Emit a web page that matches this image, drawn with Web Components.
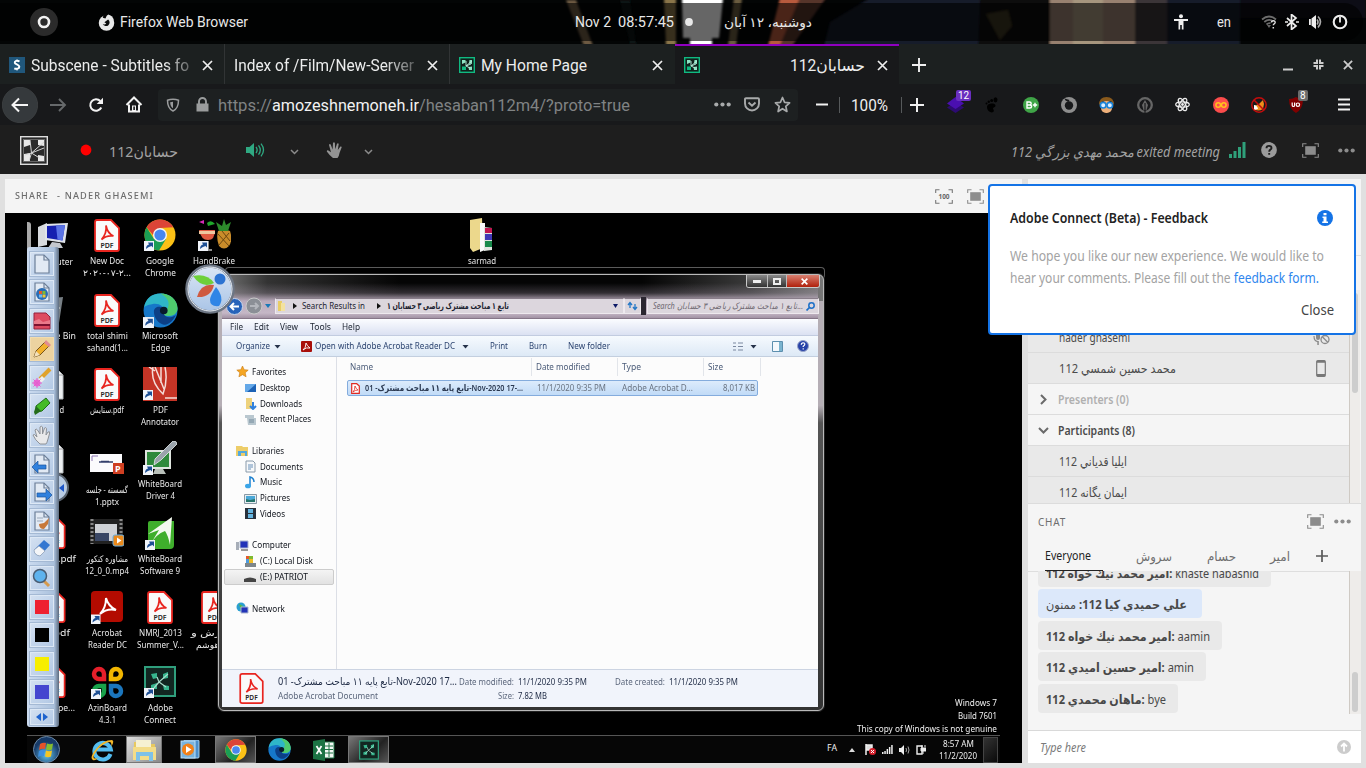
<!DOCTYPE html>
<html lang="en">
<head>
<meta charset="utf-8">
<title>Adobe Connect</title>
<style>
html,body{margin:0;height:100%;overflow:hidden;background:#e0e0e0}
body{font-family:Roboto,"DejaVu Sans",sans-serif}
</style>
</head>
<body>
<app-shell></app-shell>
<script>
/* ---------- helpers ---------- */
const svg=(w,h,vb,body,extra='')=>`<svg width="${w}" height="${h}" viewBox="${vb}" fill="none" style="display:block;flex:none" ${extra}>${body}</svg>`;
const T=(w,text,style='')=>`<fit-text w="${w}" style="${style}">${text}</fit-text>`;
/* a flex row whose cells start at the given offsets */
const row=(start,list)=>list.map(([x,html],i)=>{
  const next=i+1<list.length?list[i+1][0]-x:0;
  const lead=i===0?x-start:0;
  return `<div class="cell" style="margin-left:${lead}px;${next?`width:${next}px`:''}">${html}</div>`;
}).join('');
const define=(name,css,html)=>customElements.define(name,class extends HTMLElement{
  constructor(){super();
    const t=document.createElement('template');
    t.innerHTML=`<style>:host{display:block;box-sizing:border-box}*{box-sizing:border-box}.cell{flex:none;display:flex;align-items:center}${css}</style>${typeof html==='function'?html(this):html}`;
    this.attachShadow({mode:'open'}).append(t.content.cloneNode(true));
  }
});
const I={};
/* ---------- shell icons ---------- */
I.ring=svg(28,28,'0 0 28 28','<circle cx="14" cy="14" r="14" fill="#2b2b2b"/><circle cx="14" cy="14" r="5" stroke="#f2f2f2" stroke-width="2.600"/>');
I.fox=svg(17,17,'0 0 16 16','<circle cx="8" cy="8.500" r="7.300" fill="#e8e8e8"/><path d="M5.500 0h3.500L7 4.200 4.500 3.500z" fill="#050505"/><path d="M9.500 5.200a3.400 3.400 0 1 1-5 4.300q2 .8 3.300-.6L6 7.800z" fill="#0a0b0b"/><path d="M8.500 3.500Q8 2 9.500.5q4 1 5.500 5l-3.500-.5z" fill="#e8e8e8"/>');
I.access=svg(14,16,'0 0 14 16','<g fill="#eee"><circle cx="7" cy="2.300" r="2"/><path d="M0 5h14v2H9.500v8.500H7.800V11H6.200v4.500H4.500V7H0z"/></g>');
I.wifi=svg(16,14,'0 0 16 14','<g stroke="#6d6d6d" stroke-width="1.800"><path d="M1 4.500Q8-1.500 15 4.500"/><path d="M3.300 7Q8 3 12 6.500"/><path d="M5.500 9.500Q8 7.300 9.500 8.500"/></g><path d="M6 10l4 0-2 3z" fill="#666"/><path d="M10.500 7.500c0-2.500 4-2.200 3.600.2-.2 1-1.800 1.200-1.800 2.600M12.300 12v1.600" stroke="#ddd" stroke-width="1.500"/>');
I.bt=svg(14,16,'0 0 14 16','<path d="M2 4l9 8-4.500 3.500V.500L11 4l-9 8M0 8h3M11 8h3" stroke="#eee" stroke-width="1.700"/>');
I.vol=svg(15,14,'0 0 15 14','<path d="M1 4v6h1.800V4zM3.500 3.500L8 0v14L3.500 10.500z" fill="#eee"/><path d="M9 4.500q2 2.500 0 5M10 1.500q5 5 0 11" stroke="#aaa" stroke-width="1.600"/>');
I.power=svg(16,16,'0 0 16 16','<circle cx="8" cy="8" r="6.300" stroke="#eee" stroke-width="2.100"/><path d="M8 3v5.500" stroke="#eee" stroke-width="1.800"/>');
I.x=(s=11,c='#eee',w=1.700)=>svg(s,s,'0 0 11 11',`<path d="M1 1l9 9M10 1l-9 9" stroke="${c}" stroke-width="${w}"/>`);
I.plus=(s,c,w)=>svg(s,s,'0 0 14 14',`<path d="M7 0v14M0 7h14" stroke="${c}" stroke-width="${w}"/>`);
I.sub=svg(16,16,'0 0 16 16','<rect width="16" height="16" fill="#20577c"/><path d="M10.500 4.500C8 3 5.500 4 5.800 5.800c.3 1.700 4.300 1.700 4.500 3.900.2 2-2.800 2.700-5 1.600" stroke="#fff" stroke-width="2"/><path d="M8 2.500v2M8 11v2.500" stroke="#fff"/>');
I.cfav=svg(16,16,'0 0 16 16','<rect x=".7" y=".7" width="14.600" height="14.600" fill="#10211c" stroke="#10b981" stroke-width="1.400"/><path d="M3 3h3.500v2.500L3 7zM13 3v4l-3-.5L10.500 3zM9.500 10l3.500-.5V13h-3z" fill="#8fe3c4"/><path d="M3 9.500h4V13H3z" fill="#10b981"/><path d="M7 4v5l6-5M7 9l5-2M7 9l4 2" stroke="#b9efdc" stroke-width=".9"/>');
I.min=svg(10,14,'0 0 10 14','<path d="M0 11.500h10" stroke="#ccc" stroke-width="2"/>');
I.rest=svg(11,11,'0 0 11 11','<path d="M.5 4H4V.5M7 .5V4h3.500M.5 7H4v3.500M7 10.500V7h3.500" stroke="#ccc" stroke-width="2"/>');
I.back=svg(36,36,'0 0 36 36','<circle cx="18" cy="18" r="17.700" fill="#35393c" stroke="#46494c" stroke-width=".6"/><path d="M26 18H11M17 11.500L10.500 18l6.500 6.500" stroke="#f5f5f5" stroke-width="2"/>');
I.fwd=svg(18,16,'0 0 18 16','<path d="M1 8h15M10 2l6 6-6 6" stroke="#66696b" stroke-width="1.900"/>');
I.reload=svg(16,16,'0 0 16 16','<path d="M13.300 10.500A5.800 5.800 0 1 1 12.300 4" stroke="#f2f2f2" stroke-width="2"/><path d="M15 .7V7H8.700z" fill="#f2f2f2"/>');
I.home=svg(18,17,'0 0 18 17','<path d="M1.500 9L9 1.500 16.500 9M4 8.500V15.500h10V8.500" stroke="#f2f2f2" stroke-width="2"/><path d="M7 15V9.500h4V15z" fill="#f2f2f2"/><rect x="8.300" y="10.500" width="1.600" height="3.500" fill="#18191b"/>');
I.shield=svg(14,14,'0 0 14 14','<path d="M7 1.200Q10 1.200 12.500 2.300C12.500 7.500 11.500 11 7 13 2.500 11 1.500 7.500 1.500 2.300Q4 1.200 7 1.200z" stroke="#9a9c9d" stroke-width="1.500"/><path d="M7 3.800v6.500C5 9 4.300 7 4.200 4.300z" fill="#9a9c9d"/>');
I.lock=svg(13,15,'0 0 13 15','<path d="M.5 6.500h12v8H.5z" fill="#9a9c9d"/><path d="M3 7V4.500a3.500 3.500 0 0 1 7 0V7" stroke="#9a9c9d" stroke-width="1.900"/>');
I.dots=(c)=>svg(17,5,'0 0 17 5',`<g fill="${c}"><circle cx="2.300" cy="2.500" r="2.100"/><circle cx="8.500" cy="2.500" r="2.100"/><circle cx="14.700" cy="2.500" r="2.100"/></g>`);
I.pocket=svg(16,15,'0 0 16 15','<path d="M2 1.200h12q1 0 1 1V6.500A7 7 0 0 1 1 6.500V2.200q0-1 1-1z" stroke="#a8aaab" stroke-width="1.900"/><path d="M4.500 5.500L8 8.800l3.500-3.300" stroke="#a8aaab" stroke-width="1.900"/>');
I.star=svg(17,17,'0 0 17 17','<path d="M8.500 1.500l2.100 4.800 5 .5-3.800 3.500 1.100 5.200-4.400-2.800-4.400 2.800 1.100-5.200L1.400 6.800l5-.5z" stroke="#a8aaab" stroke-width="1.700" stroke-linejoin="round"/>');
I.dash=svg(12,3,'0 0 12 3','<path d="M0 1.500h12" stroke="#f2f2f2" stroke-width="2"/>');
I.sep=svg(1,16,'0 0 1 16','<path d="M.5 0v16" stroke="#56595b"/>');
I.layers=svg(17,17,'0 0 17 17','<path d="M8.500 6L17 11.500 8.500 17 0 11.500z" fill="#2d0b72"/><path d="M8.500 1L17 7.500 8.500 13 0 7.500z" fill="#4a0fb0"/>');
I.foot=svg(13,16,'0 0 13 16','<g fill="#000"><ellipse cx="10.500" cy="2.800" rx="2" ry="2.600"/><circle cx="6.700" cy="3.500" r="1.500"/><circle cx="3.800" cy="4.800" r="1.200"/><circle cx="1.500" cy="6.500" r="1"/><path d="M2 10c0-4 8-4.500 8.500-1.500.2 1.700-2.600 1.700-2.500 3 .2 1.200 1 1.200.8 2.500C8 17 2 15 2 10z"/></g>');
I.bplus=svg(16,16,'0 0 16 16','<circle cx="8" cy="8" r="8" fill="#3fa447"/><path d="M4 5h2.500q1.700 0 1.700 1.500T6.500 8H4zM4 8h2.800q1.800 0 1.800 1.500T6.800 11H4zM12 5.800v4.400M9.800 8h4.400" stroke="#fff" stroke-width="1.400"/>');
I.swirl=svg(16,16,'0 0 16 16','<circle cx="8" cy="8" r="8" fill="#8e8e8e"/><circle cx="8" cy="8.500" r="4.200" fill="#18191b"/><path d="M3.500 1.500l5 1.500-1 2-3-1.500z" fill="#18191b"/>');
I.face=svg(15,16,'0 0 15 16','<rect x="2" y="4" width="11" height="12" rx="5" fill="#eeb07a"/><path d="M0 8Q0 0 7.500 0T15 8l-3-4-8 0z" fill="#8a5a1c"/><g fill="#dceeff" stroke="#1c84d8" stroke-width="1.600"><circle cx="4.200" cy="8.200" r="2.800"/><circle cx="10.800" cy="8.200" r="2.800"/></g>');
I.pen=svg(16,16,'0 0 16 16','<circle cx="8" cy="8" r="6.800" stroke="#666" stroke-width="2.300"/><path d="M8 3l3 5-1.500 5h-3L5 8z" fill="#666"/><path d="M8 6v10" stroke="#18191b" stroke-width="1.200"/>');
I.react=svg(15,15,'0 0 15 15','<g stroke="#eee" stroke-width="1.200"><ellipse cx="7.500" cy="7.500" rx="6.800" ry="2.700"/><ellipse cx="7.500" cy="7.500" rx="6.800" ry="2.700" transform="rotate(60 7.500 7.500)"/><ellipse cx="7.500" cy="7.500" rx="6.800" ry="2.700" transform="rotate(120 7.500 7.500)"/></g><circle cx="7.500" cy="7.500" r="1.400" fill="#eee"/>');
I.inf=svg(16,16,'0 0 16 16','<circle cx="8" cy="8" r="8" fill="#fb4c4c"/><circle cx="5.200" cy="8" r="2.300" stroke="#ffc21c" stroke-width="1.500"/><circle cx="10.800" cy="8" r="2.300" stroke="#ffc21c" stroke-width="1.500"/>');
I.nofox=svg(16,16,'0 0 16 16','<path d="M3 12q0-4 5-5l4-4 1 4-1 5q-5 3-9 0z" fill="#f18d1b"/><path d="M3 8q3 0 4 4l-4 1z" fill="#fff"/><circle cx="8" cy="8" r="7.200" stroke="#c40d0d" stroke-width="1.500"/><path d="M3 3l10 10" stroke="#c40d0d" stroke-width="1.500"/>');
I.ublock=svg(14,16,'0 0 14 16','<path d="M7 0q3 2 7 2 0 10-7 14Q0 12 0 2q4 0 7-2z" fill="#800000"/><path d="M3.200 5.500v2.700q0 1.300 1.200 1.300t1.200-1.300V5.500" stroke="#fff" stroke-width="1.200"/><circle cx="8.900" cy="7.700" r="1.700" stroke="#fff" stroke-width="1.200"/>');
I.menu=svg(12,13,'0 0 12 13','<path d="M0 1.500h12M0 6.500h12M0 11.500h12" stroke="#f2f2f2" stroke-width="2"/>');
/* ---------- Connect icons ---------- */
I.clogo=svg(28,29,'0 0 28 29','<rect x=".7" y=".7" width="26.600" height="27.600" fill="#2a2a2a" stroke="#ddd" stroke-width="1.400"/><rect x="3.500" y="3.500" width="21" height="22" stroke="#777" stroke-width=".8"/><g fill="#e8e8e8"><path d="M4 4l6 0v5l-6 2zM18 4l6 0v6l-6-1zM4 18l6-1v8H4zM18 19l6 1v5h-6z"/></g><path d="M10 4l1.500 13L24 6M11.500 17L5 19M11.500 17L9 25M11.500 17L24 12M11.500 17l8 5" stroke="#d5d5d5" stroke-width="1"/>');
I.spk=svg(19,14,'0 0 19 14','<path d="M0 4h3.500L8 0v14L3.500 10H0z" fill="#2fa982"/><path d="M10 4q2.300 3 0 6M12.500 2.300q3.600 4.700 0 9.400M15 .7q5 6.300 0 12.600" stroke="#2fa982" stroke-width="1.300"/>');
I.chev=svg(9,6,'0 0 9 6','<path d="M1 1l3.500 3.500L8 1" stroke="#8b8b8b" stroke-width="1.500"/>');
I.hand=svg(17,17,'0 0 17 17','<path d="M7 16Q4 14 .8 9.500q0-1.600 1.600-1L5 10.300 3 3q.5-1.500 1.700-.5L6.600 7.500 7 1q1-1.500 1.900 0L9.200 7.200 11 1.800q1.300-1 1.700.3L11.800 8l2.600-3.500q1.500-.5 1.200 1L13.500 11q-.5 3.500-2 5z" fill="#949494"/>');
I.sig=svg(17,16,'0 0 17 16','<path d="M0 12h3v4H0zM4.500 9h3v7h-3zM9 5h3v11H9zM13.500 0h3v16h-3z" fill="#2fa07a"/>');
I.help=svg(16,16,'0 0 16 16','<circle cx="8" cy="8" r="7.900" fill="#9b9b9b"/><path d="M5.500 6.200c0-3 5-3 5-.3 0 1.700-2.300 1.700-2.300 3.800M8.200 11v1.800" stroke="#1e1e1e" stroke-width="1.900"/>');
I.full=(c)=>svg(17,15,'0 0 17 15',`<path d="M.7 4V.7H4.500M12.500.7h3.800V4M16.300 11v3.300h-3.800M4.500 14.300H.7V11" stroke="${c}" stroke-width="1.100"/><rect x="3.200" y="3.200" width="10.600" height="8.600" fill="${c}"/>`);
I.info=svg(16,16,'0 0 16 16','<circle cx="8" cy="8" r="8" fill="#1473e6"/><path d="M6.500 3h3v2.200h-3zM5.500 6.500h4v5H11V13H5.200v-1.500h1.300V8h-1z" fill="#fff"/>');
I.mic=svg(17,20,'0 0 17 20','<path d="M3 5q0-2 2-2t2 2v6q0 2-2 2T3 11zM4.300 14h1.500v4H4.300z" fill="#8a8a8a"/><path d="M1 9q0 5.500 4 5.500" stroke="#8a8a8a" stroke-width="1.200"/><circle cx="12" cy="12.500" r="4" stroke="#8a8a8a" stroke-width="1.300"/><path d="M9.300 9.800l5.400 5.400" stroke="#8a8a8a" stroke-width="1.300"/>');
I.phone=svg(10,17,'0 0 10 17','<rect x=".7" y=".7" width="8.600" height="15.600" rx="1" stroke="#777" stroke-width="1.200"/><path d="M1 1h8v1.800H1zM1 14h8v2H1z" fill="#777"/>');
I.cr=svg(7,11,'0 0 7 11','<path d="M1 1l4.500 4.500L1 10" stroke="#6a6a6a" stroke-width="2"/>');
I.cd=svg(11,7,'0 0 11 7','<path d="M1 1l4.500 4.500L10 1" stroke="#6a6a6a" stroke-width="2"/>');
I.send=svg(14,14,'0 0 14 14','<circle cx="7" cy="7" r="7" fill="#ccc"/><path d="M7 11.500V4M4 6.500l3-3 3 3" stroke="#fff" stroke-width="1.800"/>');
/* ---------- remote desktop icons ---------- */
const short='<path d="M0 22h10v10H0z" fill="#f0f4fa"/><path d="M2 30q0-4 3-4.500L4 23.500l5 0 0 5-1.500-1.500Q4 28 2 30z" fill="#1d4f94"/>';
I.pdf=(w=26,h=33)=>svg(w,h,'0 0 26 33',`<path d="M3 1h14l8 8v21q0 2-2 2H3q-2 0-2-2V3q0-2 2-2z" fill="#fafafa" stroke="#e8251f" stroke-width="1.800"/><path d="M12 6.500q1.500 8 7.500 10.500-7-1-12 3.500 5.500-6 4.500-14z" stroke="#e8251f" stroke-width="1.700"/><text x="13" y="28.500" font-size="7" font-weight="600" font-family="Noto Sans" text-anchor="middle" fill="#222">PDF</text>`);
const chromeG='<circle cx="16" cy="16" r="15.500" fill="#fbc116"/><path d="M2.600 8.200A15.500 15.500 0 0 1 29.400 8.200L16 9 9 16z" fill="#dc4437"/><path d="M2.600 8.200A15.500 15.500 0 0 0 15 31.500L22 20 10 20z" fill="#1a9e55"/><circle cx="16" cy="16" r="7" fill="#f4f4f4"/><circle cx="16" cy="16" r="5.600" fill="#4787ee"/>';
I.chrome=(s,a='')=>svg(s,s,'0 0 32 32',chromeG+a);
const edgeG='<circle cx="16" cy="16" r="15.500" fill="#1677c9"/><path d="M1 14C2 5 8 .5 16 .5S31.500 6 31.500 14c0 5-4 7-8 7-5 0-5-2-4-4C20 12 14 9 9 10S1 12 1 14z" fill="#2fb6c8"/><path d="M16 .5c9 0 15.500 6 15.500 13.500 0 5-4 7-8 7-5 0-5-2-4-4l3-3Q26 6 16 .5z" fill="#4fcb6e"/><path d="M10 17c0-4 5-6 8-3 2 2 1 4 1 5 1 4 7 4 11 1-3 7-8 9-11 9-5-1-9-6-9-12z" fill="#0c3f86"/><circle cx="19" cy="16" r="3.500" fill="#071a2b"/>';
I.edge=(s,a='')=>svg(s,s,'0 0 32 32',edgeG+a);
I.hb=svg(33,33,'0 0 33 33','<path d="M20 12q6-3 12 0 3 9-1 15-5 5-10 0-3-8-1-15z" fill="#c98c2a"/><path d="M20 15l11 12M24 12l8 10M31 14l-10 12" stroke="#6d4810" stroke-width="1"/><path d="M18 3l6 4 2-7 2 6 5-3-3 9h-9z" fill="#2d8a2c"/><path d="M1 11h16q0 10-7 10T1 11z" fill="#e05a42"/><path d="M1 12h16v3H1z" fill="#eec7a0"/><path d="M10 22v8M6 31h8" stroke="#bbb" stroke-width="1.500"/><path d="M9 4q4-4 8 1l-7 2z" fill="#1fa82a"/><path d="M1 3l5-2v4z" fill="#d42bb6"/>'+short);
I.pc=svg(34,30,'0 0 34 30','<path d="M2 6l9-4v22l-9 2z" fill="#d7dade"/><path d="M9 3l23-1-3 20-20-3z" fill="#dfe3ea"/><path d="M11 5l18-1-2.500 15.500L11 17z" fill="#1620b0"/><path d="M20 4.500l9-.5-2.500 15.500-5-1z" fill="#5a73e6"/><path d="M16 21l8 1 3 5H12z" fill="#c4c8ce"/>');
I.bin=svg(26,30,'0 0 22 30','<path d="M1 4l20-2-4 26-13 1z" fill="#777f85"/><path d="M4 6l3 20M10 5v22M16 5l-3 20M3 13h15M4 20h13" stroke="#b8bec2" stroke-width="1.300"/>');
I.doc=svg(22,32,'0 0 22 32','<path d="M1 1h14l6 6v24H1z" fill="#eceff1" stroke="#b5b9bd"/><path d="M15 1v6h6" stroke="#999"/>');
I.annot=svg(34,34,'0 0 34 34','<rect width="34" height="34" fill="#c53426"/><path d="M10 0q-3 15 10 27 5-13 2-27M12 0l9 22M6 0l6 4M18 0v16M22 31h12" stroke="#f4dcd8" stroke-width="1.500"/><g transform="translate(0 1)">'+short+'</g>');
I.pptx=svg(34,20,'0 0 34 20','<rect width="32" height="18" fill="#fbfbfd"/><path d="M2 7V2h6" stroke="#8e79b5"/><path d="M9 8h14M11 7.500h8" stroke="#34406c" stroke-width="1.500"/><rect x="23" y="9" width="11" height="11" fill="#cf3f22"/><text x="25" y="18" font-size="9" font-weight="bold" font-family="Noto Sans" fill="#fff">P</text>');
I.wbd=svg(34,35,'0 0 34 35','<rect x="2" y="9" width="26" height="19" fill="#dfe5df"/><rect x="4" y="11" width="22" height="15" fill="#2f8a3c"/><path d="M12 28h8l3 5H10z" fill="#b9c0ba"/><path d="M12 18L30 0q4 0 4 3L18 19l-7 5z" fill="#9aa3ab" stroke="#e9edef" stroke-width=".8"/><g transform="translate(0 2)">'+short+'</g>');
I.wbs=svg(30,34,'-2 0 30 34','<path d="M1 7q0-2 2-2h24v24q0 4-4 4H1z" fill="#3fae2c"/><path d="M1 18L25 1l-2 28q-2-10-5-14-9 3-15 14l9-15z" fill="#f3faef"/><g transform="translate(-2 2)">'+short+'</g>');
I.mp4=svg(34,28,'0 0 34 28','<rect width="33" height="25" fill="#222"/><path d="M2 0v25M31 0v25" stroke="#888" stroke-width="3" stroke-dasharray="2 2"/><rect x="5" y="5" width="22" height="17" fill="#cfd2d6"/><path d="M5 14h14v8H5z" fill="#3a4765"/><rect x="23" y="16" width="11" height="11" rx="2" fill="#eb8a1c" stroke="#67aee3"/><path d="M27 18.500v6l4.500-3z" fill="#fff"/>');
I.acro=svg(32,33,'0 0 32 33','<rect width="32" height="31" rx="4" fill="#b30b00"/><path d="M15 7q2 8 10 12-9-2-16 4 6-6 6-16z" stroke="#fff" stroke-width="2"/><g transform="translate(-.5 1.500)">'+short+'</g>');
const petal='<path d="M13 13H8.200A5 5 0 1 1 13 8.200z" stroke-width="4.500"/>';
I.azin=svg(33,33,'0 0 33 33',['#e51f2a','#f2b600','#1b76bd','#18a14a'].map((c,i)=>`<g stroke="${c}" transform="rotate(${i*90} 16.500 16.500)">${petal}</g>`).join('')+'<g transform="translate(0 1)">'+short+'</g>');
const conn='<rect x="1" y="1" width="30" height="29" fill="#122621" stroke="#2f9e7c" stroke-width="2"/><g fill="#36b58d"><path d="M7 8l6-1v5l-4 1zM7 19l6-2v6H7zM19 19l6 1v4h-5zM19 8l5-2v6l-5 1z"/></g><path d="M13 11l2 5 9-8M15 16l-5 6M15 16l7 5" stroke="#a8dccb" stroke-width="1.200"/>';
I.aconn=svg(32,32,'0 0 32 32',conn+'<g transform="translate(0 0)">'+short+'</g>');
I.sarmad=svg(26,34,'0 0 26 34','<path d="M1 2l12-2 1 30-10 4L1 30z" fill="#ecd88c"/><path d="M11 5l5 0v27l-5 2z" fill="#fafafa"/><path d="M15 9l8 1v22l-8 1z" fill="#dfe5df"/><path d="M16 10h7v5h-7z" fill="#c01650"/><path d="M16 16h7v6h-7z" fill="#4038b5"/><path d="M16 23h7v6h-7z" fill="#188a4b"/>');
I.orbwin=svg(27,27,'0 0 27 27','<defs><radialGradient id="g" cy=".7"><stop offset="0" stop-color="#63c6ef"/><stop offset="1" stop-color="#173a68"/></radialGradient></defs><circle cx="13.500" cy="13.500" r="13" fill="url(#g)" stroke="#6c89a5"/><path d="M7 8q3-2 6-1l-1 6q-3-1-6 1z" fill="#e5532a"/><path d="M14 7.500q3 1.500 6 0l-1 6q-3 1.500-6 0z" fill="#86bd2e"/><path d="M6 15q3-2 6-1l-1 6q-3-1-6 1z" fill="#3c8ee0"/><path d="M13 14.500q3 1.500 6 0l-1 6q-3 1.500-6 0z" fill="#f5c522"/>');
I.ie=svg(24,24,'0 0 24 24','<path d="M20.500 16A8.300 8.300 0 1 1 20.800 11.500H6.500" stroke="#53bdf0" stroke-width="4"/><path d="M3 22Q-1 20 6 11T22 2q3 1-1 7 2-7-5-4T4 17q-2 5 4 3-3 3-5 2z" fill="#f3b82a"/>');
I.folder=svg(25,24,'0 0 25 24','<path d="M2 4h9l2 2h10v15H2z" fill="#e8c95f"/><path d="M4 2h15v8H4z" fill="#f6f1d2"/><path d="M1 9h23v13H1z" fill="#f3dc88"/><path d="M4 23V14h17v9h-4v-5H8v5z" fill="#7ec1e8"/>');
I.wmp=svg(20,19,'0 0 20 19','<rect x="4" width="15" height="18" rx="1" fill="#4b8fca" stroke="#a8d1ee"/><rect x="1" y="1" width="14" height="17" fill="#79b4de" stroke="#bfe0f5"/><circle cx="8" cy="9.500" r="6" fill="#f28118"/><path d="M6 6v7l5.500-3.500z" fill="#fff"/>');
I.excel=svg(22,22,'0 0 22 22','<path d="M11 3h10v16H11z" fill="#f2f7f3" stroke="#1c7344"/><path d="M12 7h8M12 10.500h8M12 14h8M16 4v14" stroke="#1c7344"/><path d="M0 2l12-2v22L0 20z" fill="#1c7344"/><path d="M3.500 7l5 8M8.500 7l-5 8" stroke="#fff" stroke-width="1.700"/>');
I.azorb=svg(50,50,'0 0 50 50','<defs><linearGradient id="a" x2="0" y2="1"><stop offset="0" stop-color="#dbe6f5"/><stop offset="1" stop-color="#a9c4e6"/></linearGradient></defs><circle cx="25" cy="25" r="23" fill="url(#a)" stroke="#6d7684" stroke-width="3.500"/><circle cx="25" cy="25" r="22" stroke="#e8eef6" stroke-width="1"/><path d="M8 12q14-3 21 7-12 6-21-7z" fill="#6ed03a"/><path d="M12 33q4-14 17-12-3 13-17 12z" fill="#cf5a40"/><path d="M31 23q9 11 3 19-9 1-9-6 0-4 6-13z" fill="#2f85e6"/><circle cx="35" cy="15" r="5.500" fill="#2c73d2"/>');
/* glyphs of the annotation toolbar */
const page='<path d="M4 2h9l5 5v13H4z" fill="#e2eaf4" stroke="#6c7f98" stroke-width="1.200"/><path d="M13 2v5h5" stroke="#6c7f98" stroke-width="1.200"/>';
const S=b=>svg(22,22,'0 0 22 22',b);
const tools=[S(page),
 S(page+'<circle cx="11" cy="13" r="6" fill="#2a6db5"/><path d="M8 10h3v3H8z" fill="#e35a2c"/><path d="M11.500 10h3v3h-3z" fill="#7dbb32"/><path d="M8 13.500h3v3H8z" fill="#6fb7ee"/><path d="M11.500 13.500h3v3h-3z" fill="#f5c62e"/>'),
 S('<path d="M3 3h12l4 4v12H3z" fill="#dd4a60" stroke="#94213c"/><path d="M3 11l5-2 4 3 7-2v5H3z" fill="#ea7a8a"/><path d="M3 15h16" stroke="#7c1230" stroke-width="2"/>'),
 S('<path d="M3 19l2-6L15 3l4 4L9 17z" fill="#f0b02c" stroke="#77551c"/><path d="M13 5l2-3 5 5-2 2z" fill="#e28c92"/><path d="M3 19l2-6 4 4z" fill="#f2e0bc"/>'),
 S('<path d="M19 2L9 12" stroke="#e0a22c" stroke-width="4"/><path d="M11 9l3 3-4 4-3-3z" fill="#efefef"/><circle cx="6" cy="16" r="3.500" fill="#ee65d8"/><path d="M6 11v10M1 16h10M2.500 12.500l7 7M9.500 12.500l-7 7" stroke="#e060cc"/>'),
 S('<path d="M5 11L15 3l4 5-8 8-6 1z" fill="#45bb26" stroke="#206f16"/><path d="M5 11l5 5-6 4-1-3z" fill="#246c1a"/>'),
 S('<path d="M9 20Q4 16 2 11q1-2 4 2L4 6q1-2 2.500 0L9 10V3q1.500-1.500 2.500 0v7l2-6q1.500-1 2 .5L15 11l2-3q2-1 1.700 1L17 15q-1 4-2 5z" fill="#e9e9ea" stroke="#8e9298"/>'),
 S(page+'<path d="M1 14l6-6v4h8v4H7v4z" fill="#2f80dd" stroke="#1a539b" stroke-width=".7"/>'),
 S(page+'<path d="M21 14l-6-6v4H6v4h9v4z" fill="#2f80dd" stroke="#1a539b" stroke-width=".7"/>'),
 S(page+'<path d="M6 8h6M6 11h6" stroke="#9aa8ba"/><path d="M18 8l-5 5-5 1q0 5 5 5l4-5z" fill="#c8793a"/>'),
 S('<path d="M3 12L13 2l6 5L9 18q-6-1-6-6z" fill="#3477d1"/><path d="M3 12l5-4 6 5-5 5q-6-1-6-6z" fill="#f3f5f8" stroke="#8494a8" stroke-width=".6"/>'),
 S('<path d="M12 13l6 6" stroke="#d69a4c" stroke-width="3"/><circle cx="9" cy="9" r="6.500" fill="#5eb3ee" stroke="#4a5d73" stroke-width="1.500"/>'),
 ...['#ee2030','#000','#f7ee00','#4545cf'].map(c=>svg(14,14,'0 0 14 14',`<rect width="14" height="14" fill="${c}"/>`))];
/* ---------- slotted text drawn at an exact advance width; --ty nudges the baseline ---------- */
class FitText extends HTMLElement{
  constructor(){super();this.attachShadow({mode:'open'}).innerHTML='<style>:host{display:inline-block;white-space:pre;flex:none;line-height:1.3}span{display:inline-block;transform-origin:0 50%}</style><span><slot></slot></span>'}
  connectedCallback(){
    const w=+this.getAttribute('w'),s=this.shadowRoot.querySelector('span'),n=s.offsetWidth&&s.getBoundingClientRect().width;
    if(w&&n){s.style.transform=`translateY(var(--ty,0px)) scaleX(${w/n})`;this.style.width=w+'px'}
  }
}
/* ---------- desktop top bar ---------- */
define('gnome-bar',`:host{height:44px;display:grid;overflow:hidden;background:#000}
 svg.wall,.bar{grid-area:1/1}.wall{width:1366px;height:44px}
 .bar{display:flex;align-items:center;margin:3px 3px 3px 0;height:38px;border-radius:0 19px 19px 0;background:rgba(0,0,0,.6);color:#e8e8e8;font-size:14.500px}`,
 `<svg class="wall" viewBox="0 0 1366 44"><defs><filter id="b"><feGaussianBlur stdDeviation="1.200"/></filter></defs><rect width="1366" height="44" fill="#030505"/><g filter="url(#b)">
 <path d="M566 0h10l17 46h-9z" fill="#6d5a42"/><path d="M620 0h10l6 44h-6z" fill="#0c1515"/><path d="M664 -2h12v48h-10z" fill="#8a7548"/><path d="M682-2h41l-4 40h-7v8h-22v-8h-7z" fill="#fff"/><path d="M734-2h8l-6 48h-8z" fill="#6b5c40"/><path d="M780-2h20l-20 48h-12z" fill="#b85a3c"/><path d="M800-2h26l-34 48h-12z" fill="#56342b"/><path d="M830 22l40-24h110v48H824z" fill="#141c2c"/><path d="M980-2h70v48h-72z" fill="#0e0f0d"/><path d="M986 14l22-4 4 16-12 14z" fill="#3b3420"/>
 <path d="M1050-2h86v48h-86z" fill="#988170"/><path d="M1073-2h30v48h-30z" fill="#a6967e"/><path d="M1135-2h32v48h-32z" fill="#3a3438"/><path d="M1167-2h73v48h-73z" fill="#121c2a"/><path d="M1240-2h126v20h-126z" fill="#0b1018"/></g></svg>
 <div class="bar" style="--ty:.5px">${row(0,[[30,I.ring],[98,I.fox],[120,T(128,'Firefox Web Browser')],[575,T(36,'Nov 2')],[618,T(56,'08:57:45')],[685,svg(8,8,'0 0 8 8','<circle cx="4" cy="4" r="3.900" fill="#e8e8e8"/>')],[724,T(88,'دوشنبه، ۱۲ آبان','font-size:13px')],[1174,I.access],[1217,T(14,'en')],[1261,I.wifi],[1285,I.bt],[1308,I.vol],[1332,I.power]])}</div>`);
/* ---------- browser chrome ---------- */
define('browser-tab',`:host{width:225px;height:40px;display:flex;align-items:center;color:#eceded;font-size:16px;border-right:1px solid #313435;padding-top:2px}
 :host([active]){background:#18191b;border-top:2px solid #9000c0;border-right:0;width:224px;padding-top:0}
 ::slotted(*){flex:none}`,`<slot></slot>`);
define('browser-tabs',`:host{height:40px;display:flex;background:#1c2020;--ty:.5px}browser-tab:nth-of-type(3){border-right-color:transparent}
 .fade{-webkit-mask-image:linear-gradient(90deg,#000 78%,transparent 100%)}.end{display:flex;align-items:center;padding-top:1px}`,
 `<browser-tab><div class="cell" style="margin-left:9px;width:22px">${I.sub}</div><div class="cell fade" style="width:171px">${T(158,'Subscene - Subtitles fo')}</div>${I.x()}</browser-tab>
 <browser-tab><div class="cell fade" style="margin-left:9px;width:193px">${T(180,'Index of /Film/New-Server')}</div>${I.x()}</browser-tab>
 <browser-tab>${row(0,[[9,I.cfav],[31,T(106,'My Home Page')],[202,I.x()]])}</browser-tab>
 <browser-tab active>${row(0,[[9,I.cfav],[115,T(75,'حسابان112')],[202,I.x()]])}</browser-tab>
 <div class="end">${row(899,[[912,I.plus(14,'#f0f0f0',1.900)],[1283,I.min],[1313,I.rest],[1343,I.x(10,'#ccc',2)]])}</div>`);
define('ext-button',`:host{position:relative;width:38px;height:24px;display:flex;align-items:center}
 .badge{position:absolute;top:-3px;left:9px;padding:0 2px;height:11px;border-radius:2px;color:#fff;font:10px/11px Roboto,sans-serif}`,
 el=>`<slot></slot>${el.getAttribute('badge')?`<span class="badge" style="background:${el.getAttribute('tone')}">${el.getAttribute('badge')}</span>`:''}`);
define('browser-nav',`:host{height:41px;display:flex;align-items:center;background:#18191b;color:#eee;font-size:16px;--ty:1.500px}
 .url{display:flex;align-items:center;width:640px;height:32px;background:#1d2021;border-radius:4px;color:#808384}.exts{display:contents}`,
 `${row(0,[[2,I.back],[49,I.fwd],[88,I.reload],[125,I.home],[158,`<div class="url">${row(158,[[166,I.shield],[196,I.lock],[218,T(54,'https://')],[272,T(147,'amozeshnemoneh.ir','color:#f2f2f2')],[419,T(211,'/hesaban112m4/?proto=true')],[714,I.dots('#a8aaab')],[744,I.pocket],[774,I.star]])}</div>`],[816,I.dash],[839,I.sep],[851,T(37,'100%')],[901,I.sep],[910,I.plus(14,'#f0f0f0',2)],[947,'<div></div>']])}
 ${[[I.layers,'12','#6a2fc0'],[I.foot],[I.bplus],[I.swirl],[I.face],[I.pen],[I.react],[I.inf],[I.nofox],[I.ublock,'8','#6c6c6c']].map(([i,b,t])=>`<ext-button ${b?`badge="${b}" tone="${t}"`:''}>${i}</ext-button>`).join('')}
 <div style="margin-left:11px">${I.menu}</div>`);
/* ---------- Connect header ---------- */
define('connect-bar',`:host{height:49px;display:flex;align-items:center;background:#1e1e1e;color:#a2a2a2;padding-top:1px;font-family:"Noto Sans","DejaVu Sans",sans-serif;font-size:14px;--ty:1.500px}`,
 row(0,[[20,I.clogo],[80,svg(12,12,'0 0 12 12','<circle cx="6" cy="6" r="5.400" fill="#f00"/>')],[109,T(69,'حسابان112','font-size:15px')],[246,I.spk],[290,`<div style="padding-top:3px">${I.chev}</div>`],[326,I.hand],[364,`<div style="padding-top:3px">${I.chev}</div>`],[1011,T(209,'<i>محمد مهدي بزرگي 112 exited meeting</i>')],[1229,I.sig],[1261,I.help],[1302,I.full('#8c8c8c')],[1338,I.dots('#8c8c8c')]]));
/* ---------- remote desktop ---------- */
define('desk-icon',`:host{position:absolute;display:flex;flex-direction:column;align-items:center;width:60px;margin-left:-30px;color:#e9e9e9;font:9px/12px "Noto Sans","DejaVu Sans",sans-serif}
 .pic{height:34px;margin-bottom:3px;display:flex;align-items:center}fit-text{line-height:12px}`,
 el=>`<div class="pic"><slot></slot></div>${el.getAttribute('label').split('|').map(l=>{const [t,w]=l.split('~');return w?T(w,t):''}).join('')}`);
define('tool-strip',`:host{position:absolute;left:22px;top:34px;width:32px;height:480px;background:linear-gradient(90deg,#cddcf0,#a9c0dc 85%,#5c6b7e);border-radius:3px;display:flex;flex-direction:column;padding:4.500px 0 0 3px;gap:4.600px}
 .b{width:24px;height:24px;flex:none;display:flex;align-items:center;justify-content:center;background:linear-gradient(135deg,#d3e0f1,#b3c9e5);border:1px solid #dde8f5;outline:1px solid #a4b9d4}
 .on{background:#ecd3a0;border-color:#f2dcae}.s{height:16px}`,
 tools.map((t,i)=>`<div class="b ${i===3?'on':''}">${t}</div>`).join('')+`<div class="b s">${svg(12,8,'0 0 12 8','<path d="M5 0v8L0 4zM7 0v8l5-4z" fill="#1d62cd"/>')}</div>`);
const m=(c)=>svg(13,13,'0 0 13 13',c);
const tree=[
 [0,'Favorites',34,m('<path d="M6.500 1l1.700 3.700 4 .4-3 2.700.9 4-3.600-2.100L2.900 11.800l.9-4-3-2.700 4-.4z" fill="#f5a623" stroke="#c87810" stroke-width=".6"/>')],
 [1,'Desktop',30,m('<path d="M1 3h11v8H1z" fill="#1c62b5"/><path d="M1 3h11l-9 8H1z" fill="#64a8e8"/>')],
 [1,'Downloads',42,m('<path d="M2 1h6v11H2z" fill="#eed27c"/><path d="M9 5v6M6 9l3 3 3-3" stroke="#2f80dd" stroke-width="2"/>')],
 [1,'Recent Places',51,m('<path d="M1 2h9v3H1zM3 5h9v7H4z" fill="#b9c7cf"/><path d="M5 7h5M5 9h5" stroke="#71899a"/>')],null,
 [0,'Libraries',32,m('<path d="M0 2h6l1 1h5v9H0z" fill="#edcd69"/><path d="M2 12V7h9v5H9V9H5v3z" fill="#53a8de"/>')],
 [1,'Documents',43,m('<path d="M2 1h7l2 2v9H2z" fill="#f7f9fb" stroke="#899aaa"/><path d="M4 5h5M4 7h5M4 9h3" stroke="#6890b8"/>')],
 [1,'Music',22,m('<path d="M6 10V1q4 1 4 5" stroke="#1c80cf" stroke-width="1.500"/><ellipse cx="4" cy="10" rx="3" ry="2.300" fill="#3aa5e8"/>')],
 [1,'Pictures',30,m('<path d="M.5 2.500h12v9H.5z" fill="#e8eef2" stroke="#8899a5"/><path d="M2 4h9v6H2z" fill="#4aa8d8"/><path d="M2 10V7l4 1 5-1v3z" fill="#27756b"/>')],
 [1,'Videos',25,m('<path d="M1 1h11v11H1z" fill="#28313c"/><path d="M4 2h5v4H4zM4 7h5v4H4z" fill="#65b5e0"/>')],null,
 [0,'Computer',39,m('<path d="M0 3h3v8H0z" fill="#a7aeb8"/><path d="M4 2h8v7H4z" fill="#2233b8" stroke="#a9b6cf"/><path d="M5 11h7" stroke="#999" stroke-width="2"/>')],
 [1,'(C:) Local Disk',53,m('<path d="M1 8h11v4H1z" fill="#7d868c"/><path d="M2 1h3v3H2z" fill="#e55a2c"/><path d="M5 1h4v3H5z" fill="#7dbb32"/><path d="M2 4h3v4H2z" fill="#4b9be0"/><path d="M5 4h4v4H5z" fill="#f0bf28"/>')],
 [1,'(E:) PATRIOT',48,m('<path d="M0 9q6-3 12 0v3H0z" fill="#444"/>'),1],null,
 [0,'Network',33,m('<circle cx="5" cy="5" r="4.500" fill="#2a9fd0"/><path d="M3 2l4 2-2 4z" fill="#54b848"/><path d="M5 5h7v6H5z" fill="#2233b8" stroke="#a9b6cf"/>')]];
const tri=svg(7,5,'0 0 7 5','<path d="M.5 1h6l-3 3.500z" fill="#26324a"/>');
const rt=svg(4,6,'0 0 4 6','<path d="M0 0l4 3-4 3z" fill="#111"/>');
const cap='تابع پایه ۱۱ مباحث مشترک- 01-Nov-2020 17-...';
define('explorer-window',`:host{position:absolute;left:213px;top:61px;width:606px;height:437px;border:1px solid #b9b9b9;border-radius:6px;padding:0 5px 3px 3px;
  background:linear-gradient(90deg,#777 0,#333 8%,#050505 30%,#050505 70%,#3a3a3a 88%,#777 100%) 0 0/100% 26px no-repeat,linear-gradient(#b5aeb5 30%,#555 34%,#333);
  font:9px/12px "Noto Sans","DejaVu Sans",sans-serif;color:#1c2330;display:flex;flex-direction:column;box-shadow:0 0 0 1px #222}
 :host>div{flex:none}
 .title{height:44px;display:flex;flex-direction:column;background:linear-gradient(180deg,rgba(185,170,188,0) 8px,rgba(185,170,190,.25) 18px,#b9aabb 26px,#c5b7c6 38px,#a292a4 43px,#6b5b6d)}
 .ctl{margin-left:524px;height:13px;width:74px;display:grid;grid-template-columns:21px 19px 34px;border:1px solid #c9c9c9;border-top:0;border-radius:0 0 3px 3px;overflow:hidden}
 .ctl div{display:flex;align-items:center;justify-content:center;background:linear-gradient(#888,#333);border-right:1px solid #bbb}.ctl div:last-child{background:linear-gradient(#d98070,#b0200c);border:0}
 .addr{display:flex;align-items:center;height:18px;margin-top:9px;--ty:-.5px}
 .f{display:flex;align-items:center;height:16px;background:#dcd6dd;border:1px solid #eee9ee;border-top-color:#8a7f8b}
 .menu{height:16px;display:flex;align-items:center;background:linear-gradient(#fbfcff,#dbe1f2)}
 .tb{height:22px;display:flex;align-items:center;background:linear-gradient(#f6fafe,#dde9f6);border-top:1px solid #c2cce0;border-bottom:1px solid #c3cfdf;color:#2c4470}
 .main{height:312px;display:grid;grid-template-columns:115px 1fr;background:#fcfcfc}
 nav{border-right:1px solid #dcdfe6;padding-top:7px}.n{height:15.770px;display:flex;align-items:center;gap:3px;margin:0 2px;color:#10141c}.sel{background:linear-gradient(#f4f4f4,#e2e2e2);border:1px solid #ccc;border-radius:2px}
 .hd{height:20px;display:flex;align-items:center;color:#4a5b78}.hd .cell{height:18px}.hd .cell+.cell{border-left:1px solid #e2e5ea;padding-left:4px}
 .r{margin:3px 0 0 10px;width:411px;height:16px;border:1px solid #84acdd;border-radius:2px;background:linear-gradient(#dcebfc,#c1dbf7);display:flex;align-items:center;color:#6a7482}
 .det{height:38px;background:#f1f4fb;border-top:1px solid #ccd4e2;display:flex;align-items:center;color:#5c677c}.st{display:grid;grid-template-rows:14px 14px;align-items:center}.k{color:#1e2a44}`,
 `<div class="title"><div class="ctl"><div>${svg(8,3,'0 0 8 3','<path d="M0 0h8v3H0z" fill="#eee"/>')}</div><div>${svg(8,7,'0 0 8 7','<path d="M1 1h6v5H1z" stroke="#eee" stroke-width="2"/>')}</div><div>${I.x(7,'#fff',2.600)}</div></div>
 <div class="addr">${row(222,[[226,svg(17,17,'0 0 17 17','<circle cx="8.500" cy="8.500" r="8" fill="#2763ba" stroke="#c7d5ea"/><path d="M13 8.500H4.500M8 5L4.500 8.500 8 12" stroke="#fff" stroke-width="2"/>')],[245,svg(18,18,'0 0 18 18','<circle cx="9" cy="9" r="8" fill="#8b8f96" stroke="#c9c9c9"/><path d="M5 9h8M10 6l3 3-3 3" stroke="#b3b6bc" stroke-width="2"/>')],[265,svg(6,4,'0 0 6 4','<path d="M0 0h6l-3 4z" fill="#1879b8"/>')],[275,`<div class="f" style="width:349px">${row(276,[[278,svg(8,10,'0 0 8 10','<path d="M0 0h4v10H0z" fill="#e9cd66"/><path d="M3 2h4v8H3z" fill="#f3e2a0"/>')],[293,rt],[302,T(63,'Search Results in')],[377,rt],[387,T(122,'تابع ۱ مباحث مشترک ریاضی ۳ حسابان ۱','font-weight:bold')],[613,svg(5,4,'0 0 5 4','<path d="M0 0h5l-2.500 4z" fill="#0d1a66"/>')]])}</div>`],[624,`<div class="f" style="width:17px;justify-content:center">${svg(11,10,'0 0 11 10','<path d="M3 7V2M1 4l2-2.500L5 4M8 3v5M6 6l2 2.500L10 6" stroke="#2377c6" stroke-width="1.300"/>')}</div>`],[641,'<div style="width:5px;height:18px;background:#2b2630"></div>'],[647,`<div class="f" style="width:172px;color:#6d6770">${row(648,[[653,T(150,'<i>Search تابع ۱ مباحث مشترک ریاضی ۳ حسابان...</i>')],[806,svg(9,9,'0 0 9 9','<circle cx="5.500" cy="3.500" r="2.700" stroke="#1d70c8" stroke-width="1.500"/><path d="M3.500 5.500L.5 8.500" stroke="#1d70c8" stroke-width="1.700"/>')]])}</div>`]])}</div></div>
 <div class="menu">${row(222,[[230,T(13,'File')],[254,T(15,'Edit')],[280,T(18,'View')],[310,T(21,'Tools')],[342,T(18,'Help')]])}</div>
 <div class="tb">${row(222,[[236,T(34,'Organize')],[274,tri],[301,svg(11,11,'0 0 11 11','<rect width="11" height="11" rx="1" fill="#a80f0a"/><path d="M5 2q1 3 4 5-4-1-7 2 3-2 3-7z" stroke="#fff" stroke-width=".9"/>')],[315,T(140,'Open with Adobe Acrobat Reader DC')],[462,tri],[490,T(18,'Print')],[529,T(18,'Burn')],[568,T(42,'New folder')],[733,svg(10,9,'0 0 10 9','<path d="M0 1h3M0 4.500h3M0 8h3M5 1h5M5 4.500h5M5 8h5" stroke="#7b88a0" stroke-width="1.200"/>')],[750,tri],[772,svg(11,11,'0 0 11 11','<path d="M.5.5h10v10H.5z" fill="#f4f8fc" stroke="#5c8fae"/><path d="M7 1h3v9H7z" fill="#7ab4cf"/>')],[797,svg(12,12,'0 0 12 12','<circle cx="6" cy="6" r="5.500" fill="#2743a8" stroke="#97a3c8"/><path d="M4.300 4.800q0-2 1.800-2t1.700 1.500q0 1-1.600 2V7M6.200 8.300v1.200" stroke="#fff" stroke-width="1.200"/>')]])}</div>
 <div class="main"><nav>${tree.map(t=>t?`<div class="n ${t[4]?'sel':''}" style="padding-left:${(t[0]?20:12)-(t[4]?1:0)}px">${t[3]}${T(t[2],t[1])}</div>`:'<div class="n"></div>').join('')}</nav>
 <div><div class="hd">${row(337,[[350,T(23,'Name')],[531,T(54,'Date modified')],[617,T(19,'Type')],[703,T(15,'Size')],[760,'']])}</div>
 <div class="r">${row(348,[[351,svg(9,11,'0 0 9 11','<path d="M.7.7h5L8.300 3v7.300H.7z" fill="#fff" stroke="#e02b22" stroke-width="1.200"/><path d="M4 3q1 3 3 4-3 0-5 2 2-2 2-6z" stroke="#e02b22" stroke-width=".8"/>')],[365,T(158,cap,'font-weight:600;color:#2a3850')],[537,T(69,'11/1/2020 9:35 PM')],[622,T(71,'Adobe Acrobat D...')],[723,T(32,'8,017 KB')]])}</div></div></div>
 <div class="det">${row(222,[[239,I.pdf(25,31)],[278,`<div class="st"><span class="k">${T(179,'تابع پایه ۱۱ مباحث مشترک- 01-Nov-2020 17...','font-size:10px')}</span>${T(100,'Adobe Acrobat Document')}</div>`],[459,`<div class="st">${T(55,'Date modified:')}<span style="padding-left:39px;display:flex">${T(16,'Size:')}</span></div>`],[518,`<div class="st k">${T(69,'11/1/2020 9:35 PM')}${T(29,'7.82 MB')}</div>`],[615,`<div class="st">${T(50,'Date created:')}<span></span></div>`],[669,`<div class="st k">${T(69,'11/1/2020 9:35 PM')}<span></span></div>`]])}</div>`);
const act=(w,i,bg='linear-gradient(135deg,#777,#222 60%,#555)')=>`<div style="width:${w}px;height:27px;display:flex;align-items:center;justify-content:center;background:${bg};border:1px solid #777">${i}</div>`;
define('win-taskbar',`:host{position:absolute;left:22px;top:522px;width:973px;height:28px;display:flex;align-items:center;background:#060606;border-top:1px solid #555;color:#eee;font:9px/12px "Noto Sans",sans-serif}.st{display:grid;justify-items:center;line-height:12px}`,
 row(27,[[33,I.orbwin],[90,I.ie],[126,act(36,I.folder,'linear-gradient(135deg,#ddd,#888)')],[180,I.wmp],[215,act(41,I.chrome(22))],[268,I.edge(23)],[313,I.excel],[348,act(41,svg(20,20,'0 0 32 31',conn))],[827,`<div style="--ty:-2px">${T(10,'FA')}</div>`],[849,svg(6,4,'0 0 6 4','<path d="M0 4l3-4 3 4z" fill="#ddd"/>')],[865,svg(11,11,'0 0 11 11','<path d="M1 0v11M1 1h6v5H1" stroke="#eee" stroke-width="1.500" fill="#ddd"/><circle cx="7.500" cy="7.500" r="3.500" fill="#d6202c"/><path d="M6 6l3 3M9 6L6 9" stroke="#fff"/>')],[882,svg(11,9,'0 0 11 9','<path d="M0 7h1.500v2H0zM2.300 6h1.500v3H2.300zM4.600 4h1.500v5H4.600zM6.900 2h1.500v7H6.900zM9.200 0h1.500v9H9.200z" fill="#eee"/>')],[899,svg(11,10,'0 0 11 10','<path d="M0 3h2l3-3v10L2 7H0z" fill="#eee"/><path d="M7 3q1 2 0 4M9 1.500q2 3.500 0 7" stroke="#aaa"/>')],[916,svg(10,11,'0 0 10 11','<path d="M1 2h5v8H1z" stroke="#eee" stroke-width="1.400"/><path d="M5 4h5v3H5zM7 7v3M6 1v2M9 1v2" fill="#eee" stroke="#eee"/>')],[939,`<div class="st">${T(31,'8:57 AM')}${T(38,'11/2/2020')}</div>`],[983,'<div style="width:15px;height:26px;background:linear-gradient(135deg,#333,#0a0a0a);border:1px solid #444"></div>']]));
const D=(x,y,icon,label)=>`<desk-icon style="left:${x-5}px;top:${y-213}px" label="${label}">${icon}</desk-icon>`;
define('remote-screen',`:host{position:relative;flex:1;background:#000;overflow:hidden}
 .peek,.knob,.mark,.ghost{position:absolute}.peek{left:22px;top:9px;width:4px;height:68px;background:#aaa;border-radius:0 3px 3px 0}
 .knob{left:36px;top:260px;width:28px;height:29px;border-radius:50%;background:#b9cce4;border:2px solid #59636f;display:flex;align-items:center;justify-content:flex-end;padding-right:3px}
 .mark{right:25px;top:484px;display:flex;flex-direction:column;align-items:flex-end;color:#eee;font:9px/12.800px "Noto Sans",sans-serif}.mark fit-text{line-height:12.800px}
 .ghost{left:220px;top:54px;width:600px;height:12px;border:1px solid #5b5b5b;border-bottom:0;border-radius:4px}.orb{position:absolute;left:180px;top:51px}`,
 `${D(53,219,I.pc,'Computer~40')}${D(53,293,I.bin,'Recycle Bin~46')}${D(53,367,I.doc,'sound~22')}${D(53,441,I.doc,'')}${D(53,516,I.pdf(26,32),'file 08.pdf~46')}${D(53,590,I.pdf(26,32),'file.pdf~34')}${D(53,665,I.pdf(26,32),'newpape...~44')}
 ${D(107,218,I.pdf(26,33),'New Doc~34|۲۰۲۰-۰۷-۲...~48')}${D(160,218,I.chrome(32,short),'Google~28|Chrome~31')}${D(214,218,I.hb,'HandBrake~42')}
 ${D(107,293,I.pdf(26,33),'total shimi~41|sahand(1...~41')}${D(160,293,I.edge(35,short),'Microsoft~36|Edge~19')}
 ${D(107,367,I.pdf(26,33),'ستایش.pdf~34')}${D(160,367,I.annot,'PDF~15|Annotator~38')}
 ${D(107,447,I.pptx,'گسسته - جلسه~42|1.pptx~24')}${D(160,441,I.wbd,'WhiteBoard~44|Driver 4~29')}
 ${D(107,516,I.mp4,'مشاوره کنکور~41|12_0_0.mp4~44')}${D(160,516,I.wbs,'WhiteBoard~44|Software 9~40')}
 ${D(107,590,I.acro,'Acrobat~30|Reader DC~39')}${D(160,590,I.pdf(26,33),'NMRJ_2013~43|Summer_V...~47')}${D(214,590,I.pdf(26,33),'آموزش و~46|بی هوشم~36')}
 ${D(107,665,I.azin,'AzinBoard~39|4.3.1~17')}${D(160,665,I.aconn,'Adobe~25|Connect~32')}
 ${D(482,218,I.sarmad,'sarmad~28')}
 <div class="peek"></div><div class="knob">${svg(5,8,'0 0 5 8','<path d="M5 0v8L0 4z" fill="#1c56c8"/>')}</div><tool-strip></tool-strip>
 <div class="ghost"></div><explorer-window></explorer-window><div class="orb">${I.azorb}</div>
 <div class="mark">${T(42,'Windows 7')}${T(39,'Build 7601')}${T(140,'This copy of Windows is not genuine')}</div><win-taskbar></win-taskbar>`);
define('share-pod',`:host{display:flex;flex-direction:column;min-width:0}header{height:34px;display:flex;align-items:center;background:#f4f4f4;color:#6c6c6c;font-size:9.500px;font-weight:500;letter-spacing:1.200px}`,
 `<header>${row(5,[[15,T(34,'SHARE')],[57,T(97,'- NADER GHASEMI')],[935,svg(18,15,'0 0 18 15','<path d="M.7 4V.7H4.500M13.500.7h3.800V4M17.300 11v3.300h-3.800M4.500 14.300H.7V11" stroke="#777" stroke-width="1.100"/><text x="9" y="10" font-size="6.500" font-weight="bold" text-anchor="middle" fill="#666" font-family="Noto Sans" letter-spacing="0">100</text>')],[967,I.full('#8e8e8e')]])}</header><remote-screen></remote-screen>`);
/* ---------- attendees and chat ---------- */
define('attendee-row',`:host{height:31px;display:flex;align-items:center;padding:0 19px 0 31px;justify-content:space-between;background:#e9e9e9;border-bottom:1px solid #dcdcdc;color:#4b4b4b;font-size:12.500px;--ty:.5px}
 :host([group]){background:#f5f5f5;font-weight:600;padding-left:10px;justify-content:flex-start;--ty:1px}:host([dim]){color:#b0b0b0}`,`<slot></slot>`);
define('attendee-pod',`:host{height:325px;background:#f5f5f5;display:grid;grid-template-rows:77px 34px 1fr;border-bottom:1px solid #dcdcdc}
 .top{border-bottom:1px solid #e0e0e0}.b{display:grid;grid-template-columns:321px 11px;overflow:hidden}.l{padding-top:32px;height:240px}
 .tr{background:#eeecea;border-left:1px solid #cfcac4;padding:3px 2px 0}.th{width:6px;height:100px;border-radius:3px;background:#cdcdcd}`,
 `<div class="top"></div><div></div><div class="b"><div class="l">
 <attendee-row>${T(71,'nader ghasemi')}${I.mic}</attendee-row><attendee-row>${T(117,'محمد حسين شمسي 112')}<div style="padding-right:4px">${I.phone}</div></attendee-row>
 <attendee-row group dim><div class="cell" style="width:20px;padding-left:2px">${I.cr}</div>${T(71,'Presenters (0)')}</attendee-row>
 <attendee-row group><div class="cell" style="width:20px">${I.cd}</div>${T(77,'Participants (8)')}</attendee-row>
 <attendee-row>${T(68,'ايليا قدياني 112')}</attendee-row><attendee-row>${T(68,'ايمان يگانه 112')}</attendee-row></div><div class="tr"><div class="th"></div></div></div>`);
define('chat-bubble',`:host{height:29px;width:max-content;margin-bottom:2.500px;padding:0 12px 0 8px;display:flex;align-items:center;border-radius:4px;background:#e9e9e9;color:#484848;font-size:12.500px;--ty:1.500px}:host([private]){background:#dce8fa;padding-right:15px}`,`<slot></slot>`);
define('chat-pod',`:host{flex:1;display:grid;grid-template-rows:34px 33px 1fr 33px;background:#f5f5f5;color:#6e6e6e;font-size:12.500px}
 .h,.t,.in{display:flex;align-items:center}.h{--ty:.5px}.t{--ty:2.500px;border-bottom:1px solid #dedede;margin-right:12px;height:34px}
 .sel{color:#222;width:58px;height:34px;border-bottom:2px solid #222;display:flex;align-items:center}
 .m{display:grid;grid-template-columns:321px 12px;overflow:hidden}.l{padding:0 0 0 10px;margin-top:-13.500px}
 .tr{background:#eeecea;border-left:1px solid #cfcac4;height:143px;padding:101px 2px 0}.th{width:6px;height:40px;border-radius:3px;background:#cdcdcd}
 .in{background:#fff;border-top:1px solid #d9d9d9;color:#7a7a7a;--ty:1px}`,
 `<div class="h">${row(1028,[[1038,T(28,'CHAT','font-size:10px;letter-spacing:.8px')],[1307,I.full('#8c8c8c')],[1334,I.dots('#8c8c8c')]])}</div>
 <div class="t">${row(1028,[[1045,`<div class="sel">${T(46,'Everyone')}</div>`],[1136,T(36,'سروش')],[1207,T(29,'حسام')],[1270,T(20,'امير')],[1316,`<div style="padding-top:2px">${I.plus(12,'#5a5a5a',2)}</div>`]])}</div>
 <div class="m"><div class="l"><chat-bubble>${T(213,'<b>امير محمد نيك خواه 112:</b> khaste nabashid')}</chat-bubble><chat-bubble private>${T(141,'<b>علي حميدي كيا 112:</b> ممنون')}</chat-bubble><chat-bubble>${T(164,'<b>امير محمد نيك خواه 112:</b> aamin')}</chat-bubble><chat-bubble>${T(148,'<b>امير حسين اميدي 112:</b> amin')}</chat-bubble><chat-bubble>${T(120,'<b>ماهان محمدي 112:</b> bye')}</chat-bubble></div><div class="tr"><div class="th"></div></div></div>
 <div class="in">${row(1028,[[1040,T(46,'<i>Type here</i>')],[1337,I.send]])}</div>`);
define('feedback-toast',`:host{position:absolute;left:988px;top:184px;width:368px;height:151px;background:#fff;border:2px solid #1473e6;border-radius:4px;padding:22px 20px 0;color:#a3a3a3;font-size:13.500px;--ty:1px}
 .h{display:flex;justify-content:space-between;align-items:center;height:20px;color:#222;font-weight:600}.p{height:22px;display:flex;align-items:center}.c{display:flex;justify-content:flex-end;margin-top:12px;color:#444}`,
 `<div class="h">${T(198,'Adobe Connect (Beta) - Feedback')}<span style="margin-right:1px">${I.info}</span></div>
 <div class="p" style="margin-top:17px">${T(314,'We hope you like our new experience. We would like to')}</div>
 <div class="p">${T(309,'hear your comments. Please fill out the <span style="color:#2f86ee">feedback form.</span>')}</div>
 <div class="c">${T(33,'Close')}</div>`);
define('app-shell',`:host{width:1366px;height:768px;display:flex;flex-direction:column;overflow:hidden;background:#e0e0e0}
 .adobe{font-family:"Noto Sans","DejaVu Sans",sans-serif}
 main{flex:1;display:grid;grid-template-columns:1017px 333px;gap:6px;padding:5px;min-height:0}aside{display:flex;flex-direction:column;min-height:0}`,
 `<gnome-bar></gnome-bar><browser-tabs></browser-tabs><browser-nav></browser-nav><connect-bar></connect-bar>
 <main class="adobe"><share-pod></share-pod><aside><attendee-pod></attendee-pod><chat-pod></chat-pod></aside></main><feedback-toast class="adobe"></feedback-toast>`);
customElements.define('fit-text',FitText);
</script>
</body>
</html>
